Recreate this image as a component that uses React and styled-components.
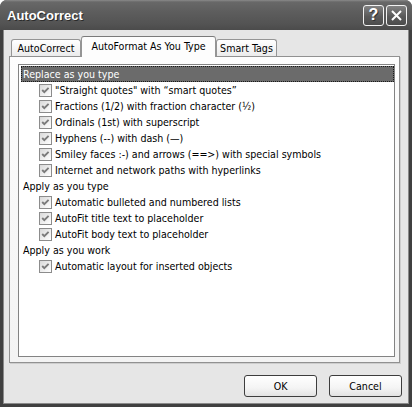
import React from "react";
import styled, { createGlobalStyle } from "styled-components";

const GlobalStyle = createGlobalStyle`
  html, body { margin: 0; padding: 0; background: #ffffff; }
  #root { width: 412px; height: 407px; }
`;

const Window = styled.div`
  width: 412px;
  height: 407px;
  box-sizing: border-box;
  display: flex;
  flex-direction: column;
  background: #404040;
  border-radius: 7px 7px 0 0;
  overflow: hidden;
  font-family: "DejaVu Sans Condensed", "DejaVu Sans", sans-serif;
  font-size: 10.6px;
  color: #000;
`;

const TitleBar = styled.div`
  height: 30px;
  flex: none;
  display: flex;
  align-items: center;
  padding: 0 5px 0 7px;
  background: linear-gradient(#8a8a8a 0px, #686868 2px, #5d5d5d 12px, #535353 24px, #4b4b4b 30px);
`;

const Title = styled.div`
  flex: 1;
  font-family: "Liberation Sans", Arial, sans-serif;
  font-weight: bold;
  font-size: 13px;
  color: #ffffff;
  text-shadow: 1px 1px 0 #2a2a2a;
  padding-top: 1px;
`;

const CaptionButtons = styled.div`
  display: flex;
  gap: 2px;
`;

const CaptionButton = styled.div`
  width: 21px;
  height: 21px;
  box-sizing: border-box;
  border: 1px solid #f2f2f2;
  border-radius: 3px;
  background: linear-gradient(#828282, #5a5a5a 55%, #4c4c4c);
  display: flex;
  align-items: center;
  justify-content: center;
  color: #ffffff;
  font-family: "Liberation Sans", Arial, sans-serif;
  font-weight: bold;
  font-size: 16px;
  line-height: 1;
  text-shadow: 1px 1px 0 #333;
`;

const Client = styled.div`
  flex: 1;
  display: flex;
  flex-direction: column;
  margin: 0 3px 3px;
  border: 1px solid #8a8a8a;
  border-top: none;
  background: #e6e6e6;
`;

const TabStrip = styled.div`
  height: 26px;
  flex: none;
  display: flex;
  align-items: flex-end;
  padding-left: 7px;
`;

const Tab = styled.div`
  box-sizing: border-box;
  width: ${(p) => p.$w}px;
  height: ${(p) => (p.$active ? 21 : 17)}px;
  margin-bottom: ${(p) => (p.$active ? -1 : 0)}px;
  position: relative;
  z-index: ${(p) => (p.$active ? 2 : 1)};
  border: 1px solid #959595;
  border-bottom: none;
  border-top-color: ${(p) => (p.$active ? "#7a7a7a" : "#959595")};
  border-radius: 3px 3px 0 0;
  background: ${(p) =>
    p.$active ? "#fdfdfd" : "linear-gradient(#ffffff, #f4f4f4 60%, #ebebeb)"};
  display: flex;
  align-items: center;
  justify-content: center;
  padding-bottom: ${(p) => (p.$active ? 2 : 0)}px;
  white-space: nowrap;
`;

const Panel = styled.div`
  box-sizing: border-box;
  height: 307px;
  flex: none;
  margin: 0 8px 0 5px;
  border: 1px solid #919191;
  background: linear-gradient(#fdfdfd, #f3f3f3);
  box-shadow: 1px 1px 0 #cdcdcd;
  padding: 7px 4px 5px 8px;
  display: flex;
`;

const ListBox = styled.div`
  flex: 1;
  border: 1px solid #838383;
  background: #ffffff;
  padding: 1px 0 0 2px;
  display: flex;
  flex-direction: column;
`;

const GroupRow = styled.div`
  height: 16px;
  box-sizing: border-box;
  display: flex;
  align-items: center;
  padding-left: 2px;
  white-space: nowrap;
  background: ${(p) => (p.$selected ? "#6b6b6b" : "transparent")};
  color: ${(p) => (p.$selected ? "#ffffff" : "#000000")};
  outline: ${(p) => (p.$selected ? "1px dotted #1a1a1a" : "none")};
  outline-offset: -1px;
`;

const ItemRow = styled.div`
  height: 16px;
  display: flex;
  align-items: center;
  gap: 3px;
  padding-left: 18px;
  white-space: nowrap;
`;

const CheckBox = styled.span`
  width: 13px;
  height: 13px;
  box-sizing: border-box;
  flex: none;
  border: 1px solid #8c8c8c;
  background: linear-gradient(135deg, #d9d9d9, #f4f4f4 70%, #ffffff);
  display: flex;
  align-items: center;
  justify-content: center;
`;

const ButtonRow = styled.div`
  display: flex;
  justify-content: flex-end;
  gap: 12px;
  padding: 12px 6px 6px 0;
`;

const Button = styled.button`
  width: 73px;
  height: 22px;
  box-sizing: border-box;
  border: 1px solid #3d3d3d;
  border-radius: 3px;
  background: linear-gradient(#ffffff, #f4f4f4 60%, #e2e2e2);
  font-family: inherit;
  font-size: inherit;
  color: #000;
  padding: 0;
`;

const Check = () => (
  <CheckBox>
    <svg width="11" height="11" viewBox="0 0 11 11">
      <polyline
        points="2.2,5 4.3,7.2 8.6,2.8"
        fill="none"
        stroke="#7c7c7c"
        strokeWidth="1.9"
      />
    </svg>
  </CheckBox>
);

const sections = [
  {
    title: "Replace as you type",
    selected: true,
    items: [
      "\"Straight quotes\" with \u201Csmart quotes\u201D",
      "Fractions (1/2) with fraction character (\u00BD)",
      "Ordinals (1st) with superscript",
      "Hyphens (--) with dash (\u2014)",
      "Smiley faces :-) and arrows (==>) with special symbols",
      "Internet and network paths with hyperlinks",
    ],
  },
  {
    title: "Apply as you type",
    items: [
      "Automatic bulleted and numbered lists",
      "AutoFit title text to placeholder",
      "AutoFit body text to placeholder",
    ],
  },
  {
    title: "Apply as you work",
    items: ["Automatic layout for inserted objects"],
  },
];

export default function App() {
  return (
    <>
      <GlobalStyle />
      <Window>
        <TitleBar>
          <Title>AutoCorrect</Title>
          <CaptionButtons>
            <CaptionButton>?</CaptionButton>
            <CaptionButton>
              <svg width="13" height="13" viewBox="0 0 13 13">
                <path d="M2 2 L11 11 M11 2 L2 11" stroke="#ffffff" strokeWidth="2" fill="none" />
              </svg>
            </CaptionButton>
          </CaptionButtons>
        </TitleBar>
        <Client>
          <TabStrip>
            <Tab $w={70}>AutoCorrect</Tab>
            <Tab $w={135} $active>AutoFormat As You Type</Tab>
            <Tab $w={61}>Smart Tags</Tab>
          </TabStrip>
          <Panel>
            <ListBox>
              {sections.map((s) => (
                <React.Fragment key={s.title}>
                  <GroupRow $selected={s.selected}>{s.title}</GroupRow>
                  {s.items.map((it) => (
                    <ItemRow key={it}>
                      <Check />
                      <span>{it}</span>
                    </ItemRow>
                  ))}
                </React.Fragment>
              ))}
            </ListBox>
          </Panel>
          <ButtonRow>
            <Button>OK</Button>
            <Button>Cancel</Button>
          </ButtonRow>
        </Client>
      </Window>
    </>
  );
}
